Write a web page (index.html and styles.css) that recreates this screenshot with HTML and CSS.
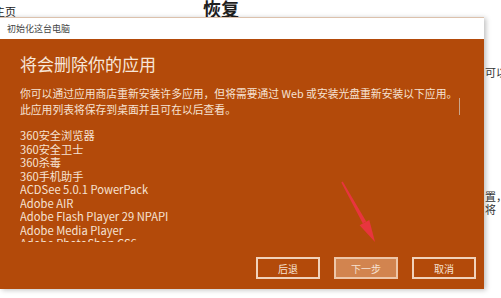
FILE: index.html
```html
<!DOCTYPE html>
<html lang="zh-CN">
<head>
<meta charset="utf-8">
<title>恢复</title>
<link rel="stylesheet" href="styles.css">
</head>
<body>
<div class="page">
  <header class="top">
    <span class="home">主页</span>
    <span class="heading">恢复</span>
  </header>
  <div class="main">
    <section class="dialog">
      <div class="titlebar">初始化这台电脑</div>
      <div class="body">
        <h1 class="title">将会删除你的应用</h1>
        <div class="content">
          <div class="scroll">
            <p class="desc">你可以通过应用商店重新安装许多应用，但将需要通过 Web 或安装光盘重新安装以下应用。<br>此应用列表将保存到桌面并且可在以后查看。</p>
            <ul class="apps">
              <li>360安全浏览器</li>
              <li>360安全卫士</li>
              <li>360杀毒</li>
              <li>360手机助手</li>
              <li>ACDSee 5.0.1 PowerPack</li>
              <li>Adobe AIR</li>
              <li>Adobe Flash Player 29 NPAPI</li>
              <li>Adobe Media Player</li>
              <li>Adobe PhotoShop CS6</li>
            </ul>
          </div>
          <div class="scrollbar"><span class="thumb"></span></div>
        </div>
        <div class="buttons">
          <button class="btn">后退</button>
          <button class="btn primary">下一步</button>
          <button class="btn">取消</button>
        </div>
      </div>
    </section>
    <aside class="side">
      <p class="line l1">可以</p>
      <p class="line l2">置，</p>
      <p class="line l3">将</p>
    </aside>
  </div>
  <svg class="arrow" width="501" height="298" viewBox="0 0 501 298">
    <polygon points="341.3,182.4 342.7,181.6 366.2,221.6 362.8,223.6" fill="#e8353e"/>
    <polygon points="375,242 369.3,219.9 359.6,225.3" fill="#e8353e"/>
  </svg>
</div>
</body>
</html>
```

FILE: styles.css
```css
html, body {
  margin: 0;
  padding: 0;
  background: #ffffff;
  overflow: hidden;
}
body {
  width: 501px;
  height: 298px;
  font-family: "Noto Sans CJK SC", sans-serif;
}
.page {
  position: relative;
  width: 501px;
  height: 298px;
  overflow: hidden;
}
.top {
  height: 17px;
  display: flex;
  align-items: center;
  color: #222;
}
.home {
  font-size: 11px;
  margin-left: -6px;
  margin-top: 5px;
}
.heading {
  font-size: 18px;
  font-weight: 700;
  line-height: 18px;
  margin-left: 187px;
  margin-top: -1px;
  color: #1e1e1e;
}
.main {
  display: flex;
  align-items: flex-start;
}
.dialog {
  width: 484px;
  height: 272px;
  flex: none;
  display: flex;
  flex-direction: column;
  box-shadow: 2px 1px 5px rgba(0, 0, 0, 0.25);
}
.titlebar {
  height: 21px;
  border-top: 1px solid #dcc1ac;
  background: #ffffff;
  font-size: 9px;
  line-height: 21px;
  color: #444;
  padding-left: 7px;
}
.body {
  flex: 1;
  background: #b34a0a;
  color: #f6e2d3;
  padding: 14px 8px 10px 20px;
  display: flex;
  flex-direction: column;
}
.title {
  margin: 0;
  font-size: 17px;
  font-weight: 400;
  line-height: 22px;
  color: #f7e6d9;
}
.content {
  margin-top: 10px;
  height: 157px;
  display: flex;
  overflow: hidden;
}
.scroll {
  flex: 1;
  overflow: hidden;
}
.desc {
  margin: 0;
  font-size: 10.8px;
  line-height: 16px;
  white-space: nowrap;
}
.apps {
  list-style: none;
  margin: 12px 0 0;
  padding: 0;
  font-size: 11.2px;
  line-height: 13.5px;
}
.scrollbar {
  width: 1px;
  margin-right: 16px;
  padding-top: 13px;
}
.thumb {
  display: block;
  width: 1px;
  height: 17px;
  background: #c9a58c;
}
.buttons {
  margin-top: auto;
  display: flex;
  justify-content: flex-end;
  gap: 14px;
}
.btn {
  width: 64px;
  height: 22px;
  border: 2px solid #f1d2bb;
  background: transparent;
  color: #f6e2d3;
  font-family: "Noto Sans CJK SC", sans-serif;
  font-size: 10px;
  padding: 0;
}
.btn.primary {
  background: #d2844f;
  border-color: #eec6a8;
}
.side {
  padding-left: 1px;
  font-size: 11px;
  color: #333;
  white-space: nowrap;
}
.line {
  margin: 0;
  line-height: 13px;
}
.l1 {
  margin-top: 49px;
}
.l2 {
  margin-top: 111px;
}
.arrow {
  position: absolute;
  top: 0;
  left: 0;
  pointer-events: none;
}
```
